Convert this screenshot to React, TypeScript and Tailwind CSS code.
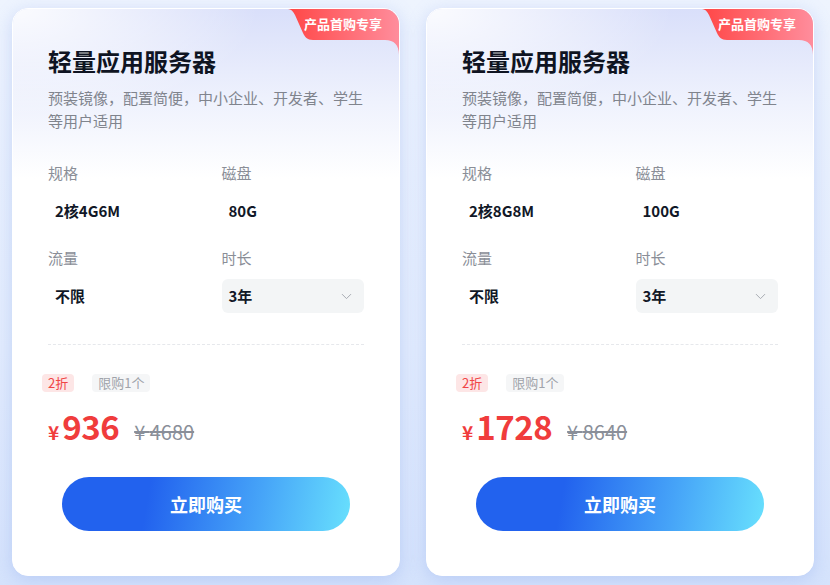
import { ChevronDown } from 'lucide-react';

const FONT = { fontFamily: '"Noto Sans CJK SC", "Noto Sans", sans-serif' };

const plans = [
  { spec: '2核4G6M', disk: '80G', traffic: '不限', term: '3年', price: '936', original: '4680' },
  { spec: '2核8G8M', disk: '100G', traffic: '不限', term: '3年', price: '1728', original: '8640' },
];

function Badge() {
  return (
    <div className="absolute top-0 right-0 w-[111px] h-[46px]">
      <svg width="111" height="46" viewBox="0 0 111 46" className="absolute inset-0">
        <defs>
          <linearGradient id="badgeGrad" x1="0" y1="0" x2="1" y2="0">
            <stop offset="0%" stopColor="#ff4646" />
            <stop offset="100%" stopColor="#ff8d9c" />
          </linearGradient>
        </defs>
        <path
          d="M0,0 H111 V46 C111,36 106,31 97,31 H25 C19,31 17,28 15,24 L7,6 C5,2 3,0 0,0 Z"
          fill="url(#badgeGrad)"
        />
      </svg>
      <span className="absolute left-[16px] top-[5px] text-[13px] leading-[20px] font-bold text-white">产品首购专享</span>
    </div>
  );
}

function Field({ label, value, select }: { label: string; value: string; select?: boolean }) {
  return (
    <div className="flex flex-col">
      <span className="text-[15px] leading-[22px] text-[#8a8e97]">{label}</span>
      <div
        className={`mt-[10px] h-[34px] pl-[7px] pr-[9px] flex items-center justify-between rounded-md ${
          select ? 'bg-[#f3f5f6]' : ''
        }`}
      >
        <span className="text-[15px] font-bold text-[#111827]">{value}</span>
        {select && <ChevronDown size={17} strokeWidth={1.4} className="text-[#a6aab1]" />}
      </div>
    </div>
  );
}

function PlanCard({ plan }: { plan: (typeof plans)[number] }) {
  return (
    <div className="relative w-[388px] h-[568px] rounded-2xl overflow-hidden bg-white border border-white shadow-[0_4px_18px_rgba(110,145,230,0.28)]">
      <div className="absolute inset-x-0 top-0 h-[170px] bg-[linear-gradient(180deg,#d9dffa_0%,#eff2fd_55%,#ffffff_100%)]" />
      <div className="absolute inset-x-0 top-0 h-[170px] bg-[radial-gradient(ellipse_at_0%_0%,rgba(255,255,255,0.9)_0%,rgba(255,255,255,0)_45%)]" />
      <Badge />

      <div className="relative flex flex-col px-[35px] pt-[36px]">
        <h2 className="text-[24px] leading-[32px] font-bold text-[#0f1422]">轻量应用服务器</h2>
        <p className="mt-[9px] -mr-2 text-[15px] leading-[23px] text-[#80848d]">
          预装镜像，配置简便，中小企业、开发者、学生等用户适用
        </p>

        <div className="mt-[30px] grid grid-cols-2 gap-x-[31px] gap-y-[19px]">
          <Field label="规格" value={plan.spec} />
          <Field label="磁盘" value={plan.disk} />
          <Field label="流量" value={plan.traffic} />
          <Field label="时长" value={plan.term} select />
        </div>

        <div className="mt-[31px] border-t border-dashed border-[#e6e8ec]" />

        <div className="mt-[29px] flex items-center gap-[18px] -ml-[6px]">
          <span className="h-[18px] px-[6px] rounded bg-[#fde6e6] text-[13px] leading-[18px] text-[#f04545]">2折</span>
          <span className="h-[18px] px-[6px] rounded bg-[#f5f6f7] text-[13px] leading-[18px] text-[#a0a3aa]">限购1个</span>
        </div>

        <div className="mt-[14px] flex items-baseline h-[40px]">
          <span className="text-[19px] font-bold text-[#f03c3c]">¥</span>
          <span className="ml-[3px] text-[33px] leading-[40px] font-bold tracking-[-0.5px] text-[#f03c3c]">{plan.price}</span>
          <span className="ml-[15px] text-[20px] text-[#8a8f99] line-through">¥ {plan.original}</span>
        </div>

        <button className="mt-[31px] self-center w-[288px] h-[54px] rounded-full bg-[linear-gradient(100deg,#2262ee_30%,#46a4f8_68%,#68e0fd_100%)] text-[18px] font-bold text-white">
          立即购买
        </button>
      </div>
    </div>
  );
}

export default function App() {
  return (
    <div
      className="w-[830px] h-[585px] overflow-hidden flex gap-[26px] pl-3 pt-2 bg-[linear-gradient(180deg,#eef4fe_0%,#e2ecfd_60%,#d5e3fc_100%)]"
      style={FONT}
    >
      {plans.map((plan, i) => (
        <PlanCard key={i} plan={plan} />
      ))}
    </div>
  );
}
